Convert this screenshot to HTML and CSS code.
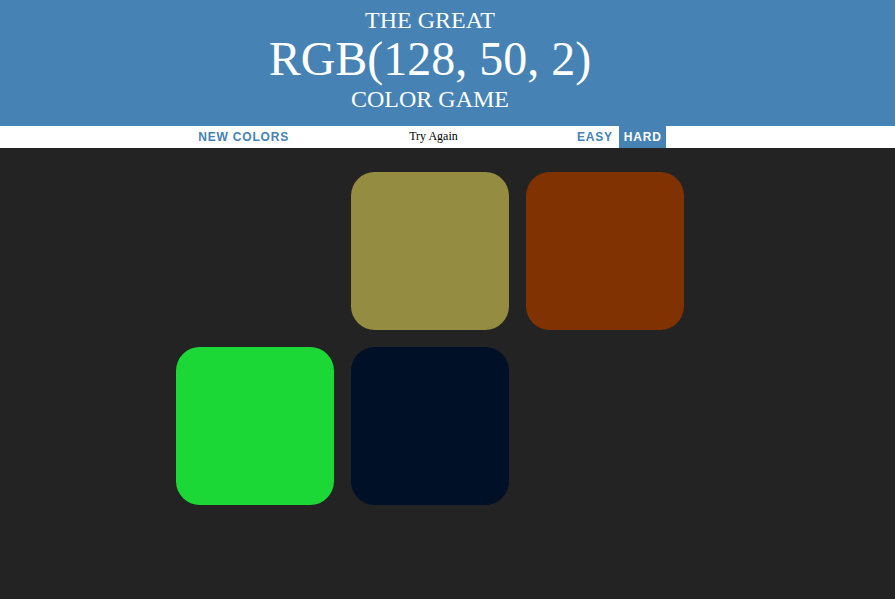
FILE: index.html
```html
<!DOCTYPE html>
<html>
<head>
<meta charset="utf-8">
<title>Color Game</title>
<link rel="stylesheet" href="styles.css">
</head>
<body>
<h1 class="title">The Great<br><span class="color-display">RGB(128, 50, 2)</span><br>Color Game</h1>
<div class="stripe">
  <div class="stripe-inner">
    <button class="btn btn-new">New Colors</button>
    <span class="message">Try Again</span>
    <button class="btn btn-mode">Easy</button>
    <button class="btn btn-mode selected">Hard</button>
  </div>
</div>
<div class="board">
  <div class="grid">
    <div class="square sq-faded"></div>
    <div class="square sq-olive"></div>
    <div class="square sq-brown"></div>
    <div class="square sq-green"></div>
    <div class="square sq-navy"></div>
    <div class="square sq-faded"></div>
  </div>
</div>
</body>
</html>
```
FILE: styles.css
```css
html, body {
  margin: 0;
  padding: 0;
  background: #232323;
  height: 100%;
}
.title {
  margin: 0;
  padding: 7px 35px 13.4px 0;
  background: #4682b4;
  color: #ffffff;
  text-align: center;
  text-transform: uppercase;
  font-family: "Liberation Serif", "Times New Roman", serif;
  font-weight: normal;
  font-size: 24px;
  line-height: 1.1;
}
.color-display {
  font-size: 200%;
}
.stripe {
  background: #ffffff;
  height: 22px;
  padding-right: 37px;
  display: flex;
  justify-content: center;
}
.stripe-inner {
  display: flex;
  align-items: stretch;
  height: 100%;
}
.btn {
  border: none;
  background: none;
  margin: 0;
  height: 100%;
  font-family: "Liberation Sans", Arial, sans-serif;
  font-weight: bold;
  font-size: 12px;
  letter-spacing: 0.8px;
  text-transform: uppercase;
  color: #4682b4;
  cursor: pointer;
  outline: none;
}
.btn-new {
  padding: 0 6px;
}
.btn-mode {
  padding: 0 4px 0 5px;
}
.btn-mode + .btn-mode {
  margin-left: 2px;
}
.selected {
  background: #4682b4;
  color: #ffffff;
}
.message {
  width: 277px;
  display: flex;
  align-items: center;
  justify-content: center;
  font-family: "Liberation Serif", "Times New Roman", serif;
  font-size: 12px;
  color: #000000;
}
.board {
  padding: 24px 35px 0 0;
}
.grid {
  width: 508px;
  margin: 0 auto;
  display: grid;
  grid-template-columns: repeat(3, 158px);
  grid-auto-rows: 158px;
  gap: 17px;
}
.square {
  border-radius: 15%;
}
.sq-faded { background: #232323; }
.sq-olive { background: #948c41; }
.sq-brown { background: #803202; }
.sq-green { background: #1cd836; }
.sq-navy { background: #001026; }
```
